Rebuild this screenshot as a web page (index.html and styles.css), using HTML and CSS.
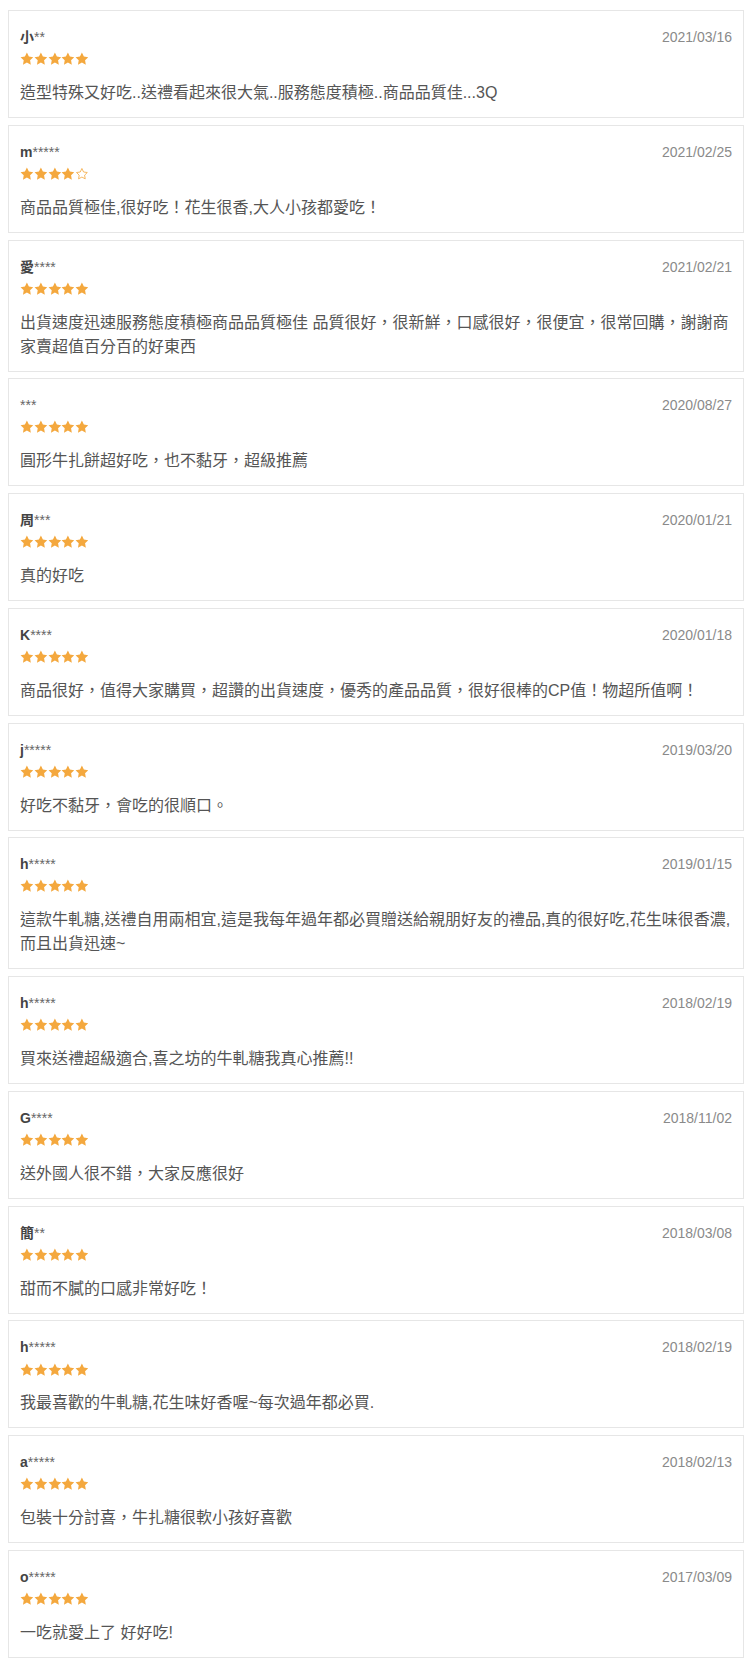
FILE: index.html
```html
<!DOCTYPE html>
<html lang="zh-Hant">
<head>
<meta charset="utf-8">
<title>評價</title>
<link rel="stylesheet" href="styles.css">
</head>
<body>
<svg class="defs" width="0" height="0" aria-hidden="true">
  <defs>
    <symbol id="sf" viewBox="0 0 24 24"><polygon points="12,1 15.41,7.91 23.03,9.02 17.52,14.39 18.82,21.98 12,18.4 5.18,21.98 6.48,14.39 0.97,9.02 8.59,7.91" fill="#f4a83e"/></symbol>
    <symbol id="se" viewBox="0 0 24 24"><polygon points="12,2.6 14.9,8.7 21.4,9.6 16.7,14.2 17.8,20.6 12,17.5 6.2,20.6 7.3,14.2 2.6,9.6 9.1,8.7" fill="none" stroke="#f4a83e" stroke-width="1.4" stroke-linejoin="round"/></symbol>
  </defs>
</svg>
<div class="reviews">

  <div class="review">
    <div class="head"><span class="name"><b>小</b>**</span><span class="date">2021/03/16</span></div>
    <div class="stars"><svg class="star"><use href="#sf"/></svg><svg class="star"><use href="#sf"/></svg><svg class="star"><use href="#sf"/></svg><svg class="star"><use href="#sf"/></svg><svg class="star"><use href="#sf"/></svg></div>
    <p class="text">造型特殊又好吃..送禮看起來很大氣..服務態度積極..商品品質佳...3Q</p>
  </div>

  <div class="review">
    <div class="head"><span class="name"><b>m</b>*****</span><span class="date">2021/02/25</span></div>
    <div class="stars"><svg class="star"><use href="#sf"/></svg><svg class="star"><use href="#sf"/></svg><svg class="star"><use href="#sf"/></svg><svg class="star"><use href="#sf"/></svg><svg class="star"><use href="#se"/></svg></div>
    <p class="text">商品品質極佳,很好吃！花生很香,大人小孩都愛吃！</p>
  </div>

  <div class="review">
    <div class="head"><span class="name"><b>愛</b>****</span><span class="date">2021/02/21</span></div>
    <div class="stars"><svg class="star"><use href="#sf"/></svg><svg class="star"><use href="#sf"/></svg><svg class="star"><use href="#sf"/></svg><svg class="star"><use href="#sf"/></svg><svg class="star"><use href="#sf"/></svg></div>
    <p class="text">出貨速度迅速服務態度積極商品品質極佳 品質很好，很新鮮，口感很好，很便宜，很常回購，謝謝商家賣超值百分百的好東西</p>
  </div>

  <div class="review">
    <div class="head"><span class="name">***</span><span class="date">2020/08/27</span></div>
    <div class="stars"><svg class="star"><use href="#sf"/></svg><svg class="star"><use href="#sf"/></svg><svg class="star"><use href="#sf"/></svg><svg class="star"><use href="#sf"/></svg><svg class="star"><use href="#sf"/></svg></div>
    <p class="text">圓形牛扎餅超好吃，也不黏牙，超級推薦</p>
  </div>

  <div class="review">
    <div class="head"><span class="name"><b>周</b>***</span><span class="date">2020/01/21</span></div>
    <div class="stars"><svg class="star"><use href="#sf"/></svg><svg class="star"><use href="#sf"/></svg><svg class="star"><use href="#sf"/></svg><svg class="star"><use href="#sf"/></svg><svg class="star"><use href="#sf"/></svg></div>
    <p class="text">真的好吃</p>
  </div>

  <div class="review">
    <div class="head"><span class="name"><b>K</b>****</span><span class="date">2020/01/18</span></div>
    <div class="stars"><svg class="star"><use href="#sf"/></svg><svg class="star"><use href="#sf"/></svg><svg class="star"><use href="#sf"/></svg><svg class="star"><use href="#sf"/></svg><svg class="star"><use href="#sf"/></svg></div>
    <p class="text">商品很好，值得大家購買，超讚的出貨速度，優秀的產品品質，很好很棒的CP值！物超所值啊！</p>
  </div>

  <div class="review">
    <div class="head"><span class="name"><b>j</b>*****</span><span class="date">2019/03/20</span></div>
    <div class="stars"><svg class="star"><use href="#sf"/></svg><svg class="star"><use href="#sf"/></svg><svg class="star"><use href="#sf"/></svg><svg class="star"><use href="#sf"/></svg><svg class="star"><use href="#sf"/></svg></div>
    <p class="text">好吃不黏牙，會吃的很順口。</p>
  </div>

  <div class="review">
    <div class="head"><span class="name"><b>h</b>*****</span><span class="date">2019/01/15</span></div>
    <div class="stars"><svg class="star"><use href="#sf"/></svg><svg class="star"><use href="#sf"/></svg><svg class="star"><use href="#sf"/></svg><svg class="star"><use href="#sf"/></svg><svg class="star"><use href="#sf"/></svg></div>
    <p class="text">這款牛軋糖,送禮自用兩相宜,這是我每年過年都必買贈送給親朋好友的禮品,真的很好吃,花生味很香濃,而且出貨迅速~</p>
  </div>

  <div class="review">
    <div class="head"><span class="name"><b>h</b>*****</span><span class="date">2018/02/19</span></div>
    <div class="stars"><svg class="star"><use href="#sf"/></svg><svg class="star"><use href="#sf"/></svg><svg class="star"><use href="#sf"/></svg><svg class="star"><use href="#sf"/></svg><svg class="star"><use href="#sf"/></svg></div>
    <p class="text">買來送禮超級適合,喜之坊的牛軋糖我真心推薦!!</p>
  </div>

  <div class="review">
    <div class="head"><span class="name"><b>G</b>****</span><span class="date">2018/11/02</span></div>
    <div class="stars"><svg class="star"><use href="#sf"/></svg><svg class="star"><use href="#sf"/></svg><svg class="star"><use href="#sf"/></svg><svg class="star"><use href="#sf"/></svg><svg class="star"><use href="#sf"/></svg></div>
    <p class="text">送外國人很不錯，大家反應很好</p>
  </div>

  <div class="review">
    <div class="head"><span class="name"><b>簡</b>**</span><span class="date">2018/03/08</span></div>
    <div class="stars"><svg class="star"><use href="#sf"/></svg><svg class="star"><use href="#sf"/></svg><svg class="star"><use href="#sf"/></svg><svg class="star"><use href="#sf"/></svg><svg class="star"><use href="#sf"/></svg></div>
    <p class="text">甜而不膩的口感非常好吃！</p>
  </div>

  <div class="review">
    <div class="head"><span class="name"><b>h</b>*****</span><span class="date">2018/02/19</span></div>
    <div class="stars"><svg class="star"><use href="#sf"/></svg><svg class="star"><use href="#sf"/></svg><svg class="star"><use href="#sf"/></svg><svg class="star"><use href="#sf"/></svg><svg class="star"><use href="#sf"/></svg></div>
    <p class="text">我最喜歡的牛軋糖,花生味好香喔~每次過年都必買.</p>
  </div>

  <div class="review">
    <div class="head"><span class="name"><b>a</b>*****</span><span class="date">2018/02/13</span></div>
    <div class="stars"><svg class="star"><use href="#sf"/></svg><svg class="star"><use href="#sf"/></svg><svg class="star"><use href="#sf"/></svg><svg class="star"><use href="#sf"/></svg><svg class="star"><use href="#sf"/></svg></div>
    <p class="text">包裝十分討喜，牛扎糖很軟小孩好喜歡</p>
  </div>

  <div class="review">
    <div class="head"><span class="name"><b>o</b>*****</span><span class="date">2017/03/09</span></div>
    <div class="stars"><svg class="star"><use href="#sf"/></svg><svg class="star"><use href="#sf"/></svg><svg class="star"><use href="#sf"/></svg><svg class="star"><use href="#sf"/></svg><svg class="star"><use href="#sf"/></svg></div>
    <p class="text">一吃就愛上了 好好吃!</p>
  </div>

</div>
</body>
</html>
```

FILE: styles.css
```css
html, body {
  background: #ffffff;
}

body {
  margin: 10px 8px 8px 8px;
  font-family: "Liberation Sans", Arial, "Noto Sans CJK TC", sans-serif;
  color: #555555;
}

.defs {
  position: absolute;
  width: 0;
  height: 0;
  overflow: hidden;
}

.reviews {
  display: flex;
  flex-direction: column;
  gap: 6.77px;
}

.review {
  border: 1px solid #e6e6e6;
  padding: 16px 11px 12px 11px;
}

.head {
  display: flex;
  justify-content: space-between;
  align-items: baseline;
  height: 20px;
  line-height: 20px;
}

.name {
  font-size: 14px;
  color: #666666;
}

.name b {
  font-weight: bold;
  color: #444444;
}

.date {
  font-size: 14px;
  color: #8a8a8a;
}

.stars {
  display: flex;
  align-items: center;
  height: 20px;
  margin-top: 2px;
}

.star {
  width: 13.8px;
  height: 13.8px;
  display: block;
}

.text {
  margin: 12px 0 0 0;
  font-size: 16px;
  line-height: 24px;
  color: #555555;
}
```
